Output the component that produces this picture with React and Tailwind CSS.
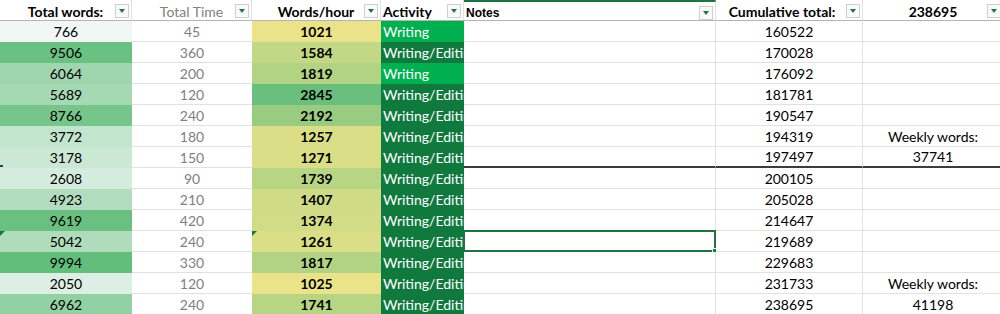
import React from 'react'

const rows = [
  { words: 766, wordsBg: 'bg-[#f0f7f5]', time: 45, rate: 1021, rateBg: 'bg-[#ebe389]', act: 'Writing', cum: 160522 },
  { words: 9506, wordsBg: 'bg-[#6bc182]', time: 360, rate: 1584, rateBg: 'bg-[#c3d885]', act: 'Writing/Editing', cum: 170028 },
  { words: 6064, wordsBg: 'bg-[#9fd6af]', time: 200, rate: 1819, rateBg: 'bg-[#b2d383]', act: 'Writing', cum: 176092 },
  { words: 5689, wordsBg: 'bg-[#a5d9b4]', time: 120, rate: 2845, rateBg: 'bg-[#6abf7c]', act: 'Writing/Editing', cum: 181781 },
  { words: 8766, wordsBg: 'bg-[#76c68b]', time: 240, rate: 2192, rateBg: 'bg-[#98cc81]', act: 'Writing/Editing', cum: 190547 },
  { words: 3772, wordsBg: 'bg-[#c2e5cd]', time: 180, rate: 1257, rateBg: 'bg-[#dade87]', act: 'Writing/Editing', cum: 194319, extra: 'Weekly words:' },
  { words: 3178, wordsBg: 'bg-[#cbe8d5]', time: 150, rate: 1271, rateBg: 'bg-[#d9de87]', act: 'Writing/Editing', cum: 197497, extra: '37741', weekEnd: true },
  { words: 2608, wordsBg: 'bg-[#d4ecdd]', time: 90, rate: 1739, rateBg: 'bg-[#b8d584]', act: 'Writing/Editing', cum: 200105 },
  { words: 4923, wordsBg: 'bg-[#b1ddbe]', time: 210, rate: 1407, rateBg: 'bg-[#cfdb86]', act: 'Writing/Editing', cum: 205028 },
  { words: 9619, wordsBg: 'bg-[#69c080]', time: 420, rate: 1374, rateBg: 'bg-[#d2dc86]', act: 'Writing/Editing', cum: 214647 },
  { words: 5042, wordsBg: 'bg-[#afddbc]', time: 240, rate: 1261, rateBg: 'bg-[#dade87]', act: 'Writing/Editing', cum: 219689, selected: true },
  { words: 9994, wordsBg: 'bg-[#63be7b]', time: 330, rate: 1817, rateBg: 'bg-[#b2d383]', act: 'Writing/Editing', cum: 229683 },
  { words: 2050, wordsBg: 'bg-[#ddefe4]', time: 120, rate: 1025, rateBg: 'bg-[#eae389]', act: 'Writing/Editing', cum: 231733, extra: 'Weekly words:' },
  { words: 6962, wordsBg: 'bg-[#92d1a3]', time: 240, rate: 1741, rateBg: 'bg-[#b8d584]', act: 'Writing/Editing', cum: 238695, extra: '41198' },
]

function FilterButton() {
  return (
    <span className="absolute right-[2px] top-[4px] flex h-[14px] w-[14px] items-center justify-center border border-[#cfcfcf] bg-[#fafafa]">
      <span className="h-0 w-0 border-x-[3.5px] border-t-[4px] border-x-transparent border-t-[#217346]" />
    </span>
  )
}

function ErrorMark() {
  return <span className="absolute left-0 top-0 h-0 w-0 border-r-[5px] border-t-[5px] border-r-transparent border-t-[#1e7145]" />
}

export default function App() {
  const cell = 'relative flex h-[21px] items-center overflow-hidden whitespace-nowrap border-b'
  return (
    <div className="w-[1000px] h-[314px] overflow-hidden bg-white font-['Lato',sans-serif] text-[14px] text-black">
      <div className="grid w-[1003px] grid-cols-[132px_120px_129px_83px_252px_147px_140px]">
        {/* header row */}
        <div className="relative flex h-[21px] items-center justify-center border-b border-r border-b-[#b4b4b4] border-r-[#e1e1e1] pt-[2px] font-bold">
          Total words:
          <FilterButton />
        </div>
        <div className="relative flex h-[21px] items-center justify-center border-b border-r border-b-[#b4b4b4] border-r-[#e1e1e1] pt-[2px] text-[#808080]">
          Total Time
          <FilterButton />
        </div>
        <div className="relative flex h-[21px] items-center justify-center border-b border-r border-b-[#b4b4b4] border-r-[#e1e1e1] pt-[2px] font-bold">
          Words/hour
          <FilterButton />
        </div>
        <div className="relative flex h-[21px] items-center border-b border-r border-b-[#b4b4b4] border-r-[#e1e1e1] pl-[2px] pt-[2px] font-bold">
          Activity
          <FilterButton />
        </div>
        <div className="relative flex h-[21px] items-start border-b border-r border-t-2 border-t-[#217346] border-b-[#b4b4b4] border-r-[#e1e1e1] pl-[2px] pt-[2px] font-['Liberation_Sans',sans-serif] text-[12px] font-bold">
          Notes
          <FilterButton />
        </div>
        <div className="relative flex h-[21px] items-center justify-center border-b border-r border-b-[#b4b4b4] border-r-[#e1e1e1] pr-[14px] pt-[2px] font-bold">
          Cumulative total:
          <FilterButton />
        </div>
        <div className="relative flex h-[21px] items-center justify-center border-b border-b-[#b4b4b4] pt-[2px] font-bold">
          238695
          <FilterButton />
        </div>

        {rows.map((r, i) => {
          const lineB = r.weekEnd ? 'border-b-2 border-b-[#3c3c3c]' : 'border-b-[#e1e1e1]'
          return (
            <React.Fragment key={i}>
              <div className={`${cell} justify-center border-transparent ${r.wordsBg}`}>
                {r.selected && <ErrorMark />}
                {r.weekEnd && <span className="absolute bottom-0 left-0 h-[2px] w-[3px] bg-[#3c3c3c]" />}
                {r.words}
              </div>
              <div className={`${cell} justify-center border-b-[#e1e1e1] bg-white text-[#808080]`}>{r.time}</div>
              <div className={`${cell} justify-center border-transparent font-bold ${r.rateBg}`}>
                {r.selected && <ErrorMark />}
                {r.rate}
              </div>
              <div
                className={`${cell} border-transparent pl-[2px] text-white ${
                  r.act === 'Writing' ? 'bg-[#00b050]' : 'bg-[#107a3e]'
                }`}
              >
                {r.act}
              </div>
              <div className={`relative h-[21px] border-b border-r border-r-[#e1e1e1] bg-white ${lineB}`}>
                {r.selected && (
                  <div className="absolute -left-px -top-px bottom-[-1px] right-[-1px] border-2 border-[#217346]">
                    <span className="absolute bottom-[-4px] right-[-4px] h-[6px] w-[6px] border border-white bg-[#217346]" />
                  </div>
                )}
              </div>
              <div className={`${cell} justify-center border-r border-r-[#e1e1e1] bg-white ${lineB}`}>{r.cum}</div>
              <div className={`${cell} justify-center bg-white ${lineB}`}>{r.extra}</div>
            </React.Fragment>
          )
        })}
      </div>
    </div>
  )
}
